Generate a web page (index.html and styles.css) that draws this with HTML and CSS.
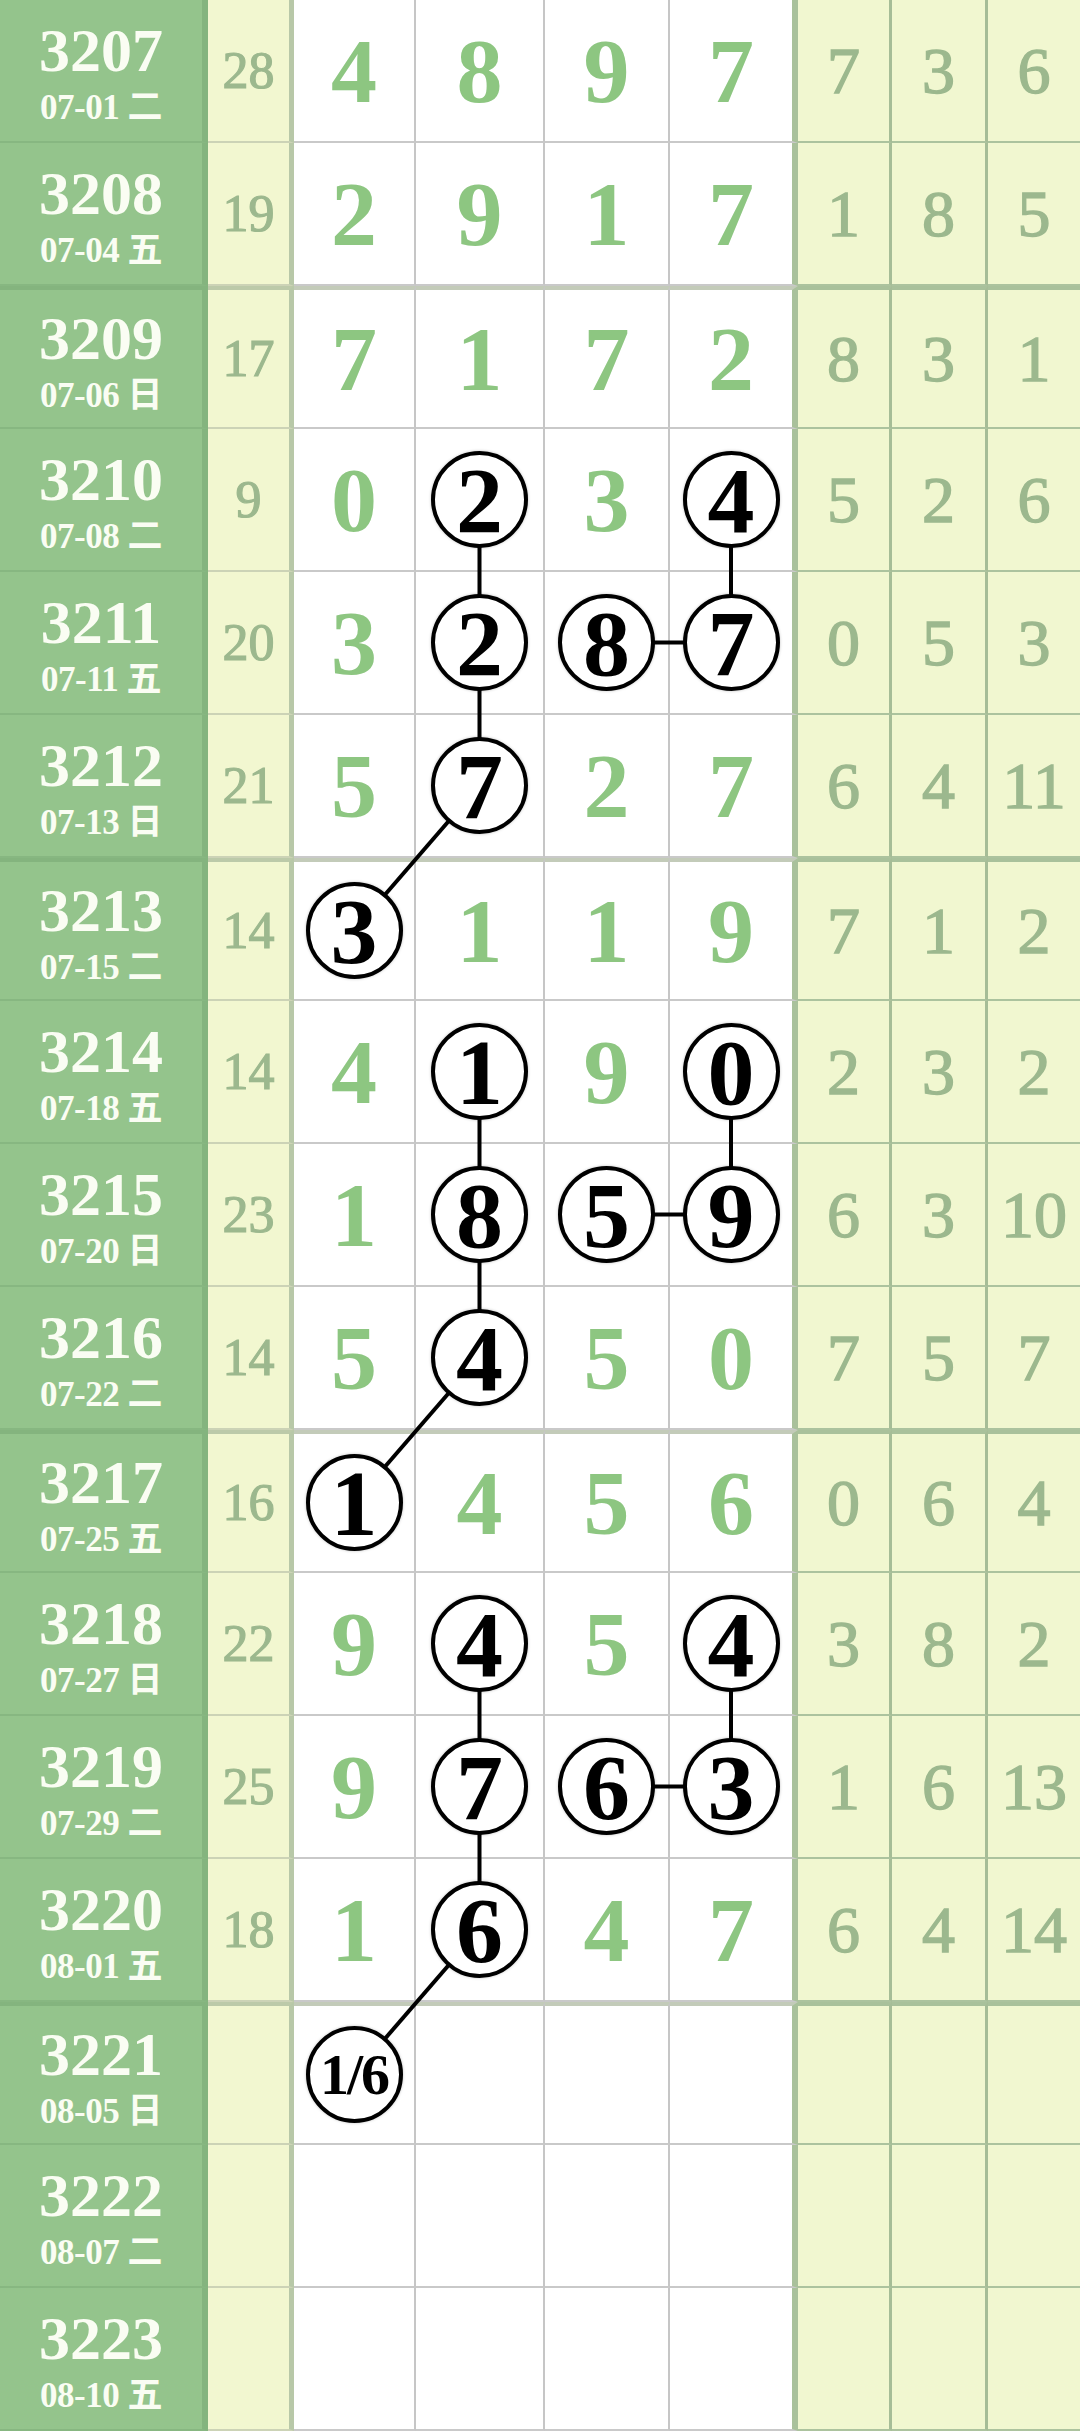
FILE: index.html
```html
<!DOCTYPE html>
<html lang="zh">

<head>
    <meta charset="UTF-8">
    <meta name="viewport" content="width=device-width, initial-scale=1.0">
    <title>走势图</title>
    <link rel="stylesheet" href="styles.css">
</head>

<body>
    <div class="chart">
        <div class="grid" id="grid"></div>

        <svg class="links" width="1080" height="2431" viewBox="0 0 1080 2431">
            <g stroke="#000" stroke-width="4" fill="none">
                <line x1="479.5" y1="499.5" x2="479.5" y2="785.5" />
                <line x1="479.5" y1="785.5" x2="354" y2="930.5" />
                <line x1="731" y1="499.5" x2="731" y2="642.5" />
                <line x1="606.5" y1="642.5" x2="731" y2="642.5" />

                <line x1="479.5" y1="1071.5" x2="479.5" y2="1357.5" />
                <line x1="479.5" y1="1357.5" x2="354" y2="1502.5" />
                <line x1="731" y1="1071.5" x2="731" y2="1214.5" />
                <line x1="606.5" y1="1214.5" x2="731" y2="1214.5" />

                <line x1="479.5" y1="1643.5" x2="479.5" y2="1929.5" />
                <line x1="479.5" y1="1929.5" x2="354" y2="2074.5" />
                <line x1="731" y1="1643.5" x2="731" y2="1786.5" />
                <line x1="606.5" y1="1786.5" x2="731" y2="1786.5" />
            </g>
        </svg>
    </div>

    <script>
        // issue, date, weekday, sum, four digits (* = circled), three gaps
        const rows = [
            ['3207', '07-01', '二', '28', ['4', '8', '9', '7'], ['7', '3', '6']],
            ['3208', '07-04', '五', '19', ['2', '9', '1', '7'], ['1', '8', '5']],
            ['3209', '07-06', '日', '17', ['7', '1', '7', '2'], ['8', '3', '1']],
            ['3210', '07-08', '二', '9', ['0', '*2', '3', '*4'], ['5', '2', '6']],
            ['3211', '07-11', '五', '20', ['3', '*2', '*8', '*7'], ['0', '5', '3']],
            ['3212', '07-13', '日', '21', ['5', '*7', '2', '7'], ['6', '4', '11']],
            ['3213', '07-15', '二', '14', ['*3', '1', '1', '9'], ['7', '1', '2']],
            ['3214', '07-18', '五', '14', ['4', '*1', '9', '*0'], ['2', '3', '2']],
            ['3215', '07-20', '日', '23', ['1', '*8', '*5', '*9'], ['6', '3', '10']],
            ['3216', '07-22', '二', '14', ['5', '*4', '5', '0'], ['7', '5', '7']],
            ['3217', '07-25', '五', '16', ['*1', '4', '5', '6'], ['0', '6', '4']],
            ['3218', '07-27', '日', '22', ['9', '*4', '5', '*4'], ['3', '8', '2']],
            ['3219', '07-29', '二', '25', ['9', '*7', '*6', '*3'], ['1', '6', '13']],
            ['3220', '08-01', '五', '18', ['1', '*6', '4', '7'], ['6', '4', '14']],
            ['3221', '08-05', '日', '', ['*1/6', '', '', ''], ['', '', '']],
            ['3222', '08-07', '二', '', ['', '', '', ''], ['', '', '']],
            ['3223', '08-10', '五', '', ['', '', '', ''], ['', '', '']]
        ];

        const grid = document.getElementById('grid');

        function addCell(cls, html) {
            const cell = document.createElement('div');
            cell.className = cls;
            cell.innerHTML = html;
            grid.appendChild(cell);
        }

        rows.forEach((row, i) => {
            const gs = (i - 2) % 4 === 0 ? ' gs' : '';

            addCell('cell issue' + gs, `
                <span class="no">${row[0]}</span>
                <span class="date">${row[1]} ${row[2]}</span>
            `);
            addCell('cell sum' + gs, row[3]);

            row[4].forEach(d => {
                let html = d;
                if (d.startsWith('*')) {
                    const v = d.slice(1);
                    html = `<span class="ball${v.length > 1 ? ' small' : ''}">${v}</span>`;
                }
                addCell('cell num' + gs, html);
            });

            row[5].forEach(d => {
                addCell('cell miss' + gs, d);
            });
        });
    </script>
</body>

</html>
```

FILE: styles.css
```css
body {
    margin: 0;
    background-color: #fff;
    font-family: "Liberation Serif", "Noto Sans CJK SC", serif;
}

.chart {
    position: relative;
    width: 1080px;
}

.grid {
    display: grid;
    grid-template-columns: 208px 86px 122px 129px 125px 128px 94px 96px 92px;
    grid-auto-rows: 143px;
}

.cell {
    box-sizing: border-box;
    display: flex;
    align-items: center;
    justify-content: center;
    border-bottom: 2px solid #c9c9c9;
}

.cell.gs {
    border-top: 4px solid #c3cbb9;
}

/* issue column */
.issue {
    flex-direction: column;
    gap: 9px;
    padding-top: 2px;
    background-color: #94c48c;
    color: #fafdf3;
    font-weight: bold;
    border-right: 6px solid #84b47e;
    border-bottom-color: #87b781;
}

.issue.gs {
    border-top-color: #84b47e;
}

.issue .no {
    font-size: 62px;
    line-height: 62px;
}

.issue .date {
    font-size: 35px;
    line-height: 35px;
    letter-spacing: -0.5px;
}

/* sum column */
.sum {
    background-color: #f2f7d0;
    color: #9cb88e;
    font-size: 52px;
    line-height: 1;
    -webkit-text-stroke: 1.2px #9cb88e;
    border-right: 5px solid #b8c8a8;
    border-bottom-color: #ccd3b6;
}

.sum.gs {
    border-top-color: #bccaa9;
}

/* digit columns */
.num {
    background-color: #fff;
    color: #8dc681;
    font-size: 92px;
    font-weight: bold;
    line-height: 1;
    border-right: 2px solid #c6c6c6;
}

.num:nth-child(9n+6) {
    border-right: 6px solid #a9c19b;
}

.ball {
    position: relative;
    z-index: 2;
    box-sizing: border-box;
    width: 97px;
    height: 97px;
    display: flex;
    align-items: center;
    justify-content: center;
    border: 4px solid #000;
    border-radius: 50%;
    background-color: #fff;
    color: #000;
    font-size: 94px;
    line-height: 1;
    box-shadow: 0 0 3px rgba(0, 0, 0, 0.25);
}

.ball.small {
    font-size: 58px;
    letter-spacing: -2px;
}

/* gap columns */
.miss {
    background-color: #f1f7d0;
    color: #9cb88e;
    font-size: 66px;
    line-height: 1;
    -webkit-text-stroke: 1.4px #9cb88e;
    border-right: 3px solid #a6bd97;
    border-bottom-color: #acc39e;
}

.miss:nth-child(9n) {
    border-right: none;
}

.miss.gs {
    border-top-color: #a9c19b;
}

.links {
    position: absolute;
    top: 0;
    left: 0;
    z-index: 1;
    pointer-events: none;
}
```
